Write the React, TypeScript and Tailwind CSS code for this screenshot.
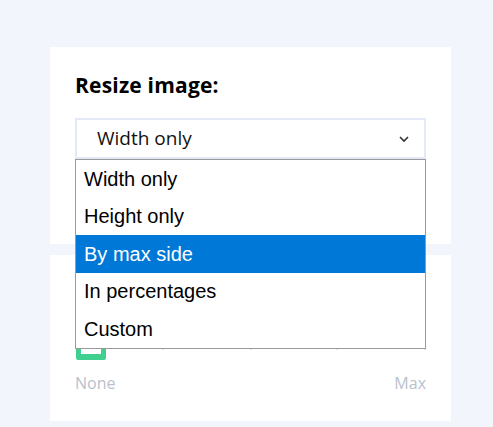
import React from 'react';

const options = ['Width only', 'Height only', 'By max side', 'In percentages', 'Custom'];

export default function App() {
  return (
    <div className="min-h-[427px] w-full bg-[#f2f5fc] pt-[47px] pl-[50px]" style={{ fontFamily: '"Open Sans", "Noto Sans", sans-serif' }}>
      <div className="w-[401px] flex flex-col gap-[11px]">
        {/* Resize card */}
        <div className="bg-white h-[197px] px-[25px] pt-[24px]">
          <h2 className="text-[21px] font-bold text-black leading-[28px] tracking-[0.2px]">Resize image:</h2>
          <div className="relative mt-[19px]">
            <div className="h-[41px] border-2 border-[#e3e9f7] flex items-center justify-between pl-[20px] pr-[14px]">
              <span className="text-[19px] text-[#111]">Width only</span>
              <svg width="12" height="8" viewBox="0 0 12 8" fill="none" stroke="#333" strokeWidth="1.6">
                <path d="M2 2l4 4 4-4" />
              </svg>
            </div>
            <ul className="absolute left-0 right-0 top-[41px] z-10 bg-white border border-[#9a9a9a]" style={{ fontFamily: '"Liberation Sans", Arial, sans-serif' }}>
              {options.map((o) => (
                <li
                  key={o}
                  className={
                    o === 'By max side'
                      ? 'h-[37.5px] flex items-center px-[8px] text-[20px] bg-[#0078d7] text-white'
                      : 'h-[37.5px] flex items-center px-[8px] text-[20px] text-black'
                  }
                >
                  {o}
                </li>
              ))}
            </ul>
          </div>
        </div>

        {/* Slider card (its heading sits under the open list) */}
        <div className="bg-white h-[166px] px-[25px] pt-[83px]">
          <div className="relative h-[22px]">
            {[87, 175, 261, 349].map((x) => (
              <div key={x} className="absolute top-[9px] w-[2px] h-[3px] bg-[#e3e6ed]" style={{ left: x }} />
            ))}
            <div className="absolute left-[1px] top-0 w-[30px] h-[22px] bg-[#3fcf8e] rounded-[2px] px-[5px] pb-[6px]">
              <div className="w-full h-full bg-white" />
            </div>
          </div>
          <div className="flex justify-between mt-[13px] text-[16px] leading-[20px] text-[#b9c1cd]">
            <span>None</span>
            <span>Max</span>
          </div>
        </div>
      </div>
    </div>
  );
}
